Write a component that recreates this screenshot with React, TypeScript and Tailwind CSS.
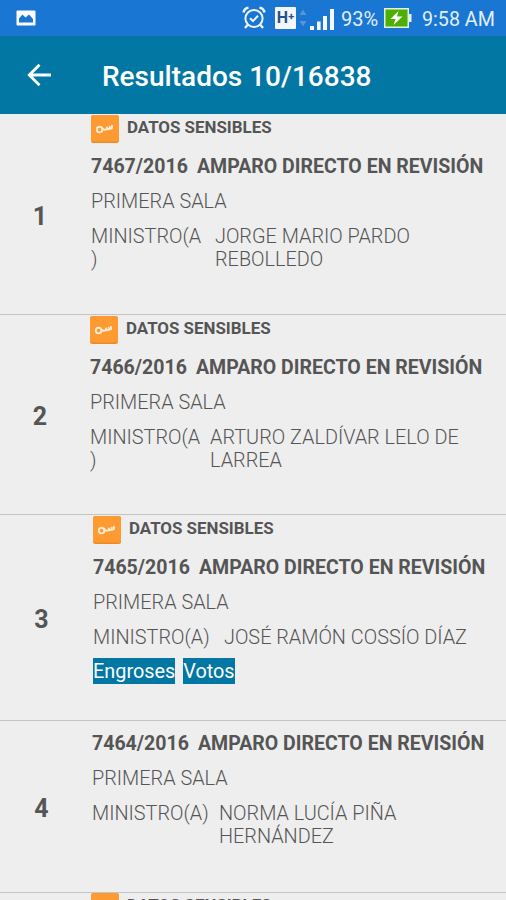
import { clsx } from 'clsx'

interface Resolution {
  position: number
  sensitive: boolean
  file: string
  kind: string
  chamber: string
  minister: string
  documents?: string[]
  wrapLabel?: boolean
  row: string
  indent: string
  gap: string
}

const RESULTS: Resolution[] = [
  {
    position: 1,
    sensitive: true,
    file: '7467/2016',
    kind: 'AMPARO DIRECTO EN REVISIÓN',
    chamber: 'PRIMERA SALA',
    minister: 'JORGE MARIO PARDO REBOLLEDO',
    wrapLabel: true,
    row: 'h-[201px]',
    indent: 'w-[91px] pr-[11px]',
    gap: 'gap-[10px]',
  },
  {
    position: 2,
    sensitive: true,
    file: '7466/2016',
    kind: 'AMPARO DIRECTO EN REVISIÓN',
    chamber: 'PRIMERA SALA',
    minister: 'ARTURO ZALDÍVAR LELO DE LARREA',
    wrapLabel: true,
    row: 'h-[200px]',
    indent: 'w-[90px] pr-[10px]',
    gap: 'gap-[6px]',
  },
  {
    position: 3,
    sensitive: true,
    file: '7465/2016',
    kind: 'AMPARO DIRECTO EN REVISIÓN',
    chamber: 'PRIMERA SALA',
    minister: 'JOSÉ RAMÓN COSSÍO DÍAZ',
    documents: ['Engroses', 'Votos'],
    row: 'h-[206px]',
    indent: 'w-[93px] pr-[10px]',
    gap: 'gap-[11px]',
  },
  {
    position: 4,
    sensitive: false,
    file: '7464/2016',
    kind: 'AMPARO DIRECTO EN REVISIÓN',
    chamber: 'PRIMERA SALA',
    minister: 'NORMA LUCÍA PIÑA HERNÁNDEZ',
    row: 'h-[172px]',
    indent: 'w-[92px] pr-[9px]',
    gap: 'gap-[7px]',
  },
]

function PictureIcon() {
  return (
    <svg width="20" height="16" viewBox="0 0 20 16" className="shrink-0">
      <rect x="0.5" y="0.5" width="19" height="15" rx="1" fill="#fff" />
      <path d="M3 12.5V8.5L6.5 4.5L9.5 7.5L13 4.5L17 9V12.5Z" fill="#1976d2" />
    </svg>
  )
}

function AlarmIcon() {
  return (
    <svg width="24" height="24" viewBox="0 0 24 24" fill="none" stroke="#eef5fc" strokeWidth="2" className="shrink-0">
      <circle cx="12" cy="12.5" r="8.6" />
      <path d="M1.5 6.5C2 4 4 2 6.5 1.8M22.5 6.5C22 4 20 2 17.5 1.8" strokeWidth="2.6" />
      <path d="M5.5 19L3 22M18.5 19L21 22" strokeWidth="2.4" />
      <path d="M8 12.2L11 15L16 9.8" />
    </svg>
  )
}

function NetworkIcon() {
  return (
    <div className="flex items-center">
      <div className="flex h-[22px] w-[21px] items-center justify-center rounded-[1px] bg-[#f3f7fc] text-[16px] leading-none font-bold text-[#27518c]">
        H<span className="-mt-1 text-[11px]">+</span>
      </div>
      <svg width="8" height="18" viewBox="0 0 8 18" fill="#5a93d6" className="ml-[3px]">
        <path d="M0.5 6L4 0.5L7.5 6Z" />
        <path d="M0.5 12L4 17.5L7.5 12Z" />
      </svg>
    </div>
  )
}

function SignalIcon() {
  return (
    <svg width="24" height="21" viewBox="0 0 24 21" fill="#f4f9ff" className="shrink-0">
      <rect x="0" y="17" width="4" height="4" />
      <rect x="7" y="12.5" width="3.6" height="8.5" />
      <rect x="13" y="7" width="4" height="14" />
      <rect x="20" y="0" width="4" height="21" />
    </svg>
  )
}

function BatteryIcon() {
  return (
    <svg width="28" height="20" viewBox="0 0 28 20" className="shrink-0">
      <rect x="0.75" y="0.75" width="23.5" height="18.5" fill="#4cb004" stroke="#e3f0dc" strokeWidth="1.5" />
      <rect x="25" y="6" width="2.5" height="8" fill="#e3f0dc" />
      <path d="M14.5 3L6.5 11H11.5L9.5 17L18.5 8.5H13Z" fill="#fff" />
    </svg>
  )
}

function BackIcon() {
  return (
    <svg width="24" height="24" viewBox="0 0 24 24" fill="none" stroke="#fff" strokeWidth="2.8">
      <path d="M24 12H3.5M12.5 1.8L2.3 12L12.5 22.2" />
    </svg>
  )
}

function SensitiveHeader() {
  return (
    <div className="flex h-[29px] items-start gap-2">
      <svg width="28" height="28" viewBox="0 0 28 28" className="shrink-0">
        <rect width="28" height="28" rx="2.5" fill="#f08a24" />
        <rect width="28" height="26.5" rx="2.5" fill="#fd9a31" />
        <g fill="none" stroke="#ffecd2" strokeWidth="1.9" strokeLinecap="round" strokeLinejoin="round">
          <circle cx="8.6" cy="14.6" r="2.8" />
          <path d="M11.4 13.2L13 14.8L16 14.2V12.4M16 14.2L18.8 13.8V11.8M18.8 13.8L21 13V10.6" />
        </g>
      </svg>
      <span className="mt-[2px] text-[16.9px] leading-5 font-bold whitespace-nowrap">DATOS SENSIBLES</span>
    </div>
  )
}

function StatusBar() {
  return (
    <div className="flex h-9 shrink-0 items-center bg-[#1976d2] pl-4 text-[20px] text-[#e3eefa]">
      <PictureIcon />
      <div className="ml-[206px] flex items-center whitespace-nowrap">
        <AlarmIcon />
        <div className="ml-[9px]">
          <NetworkIcon />
        </div>
        <div className="mt-[3px] ml-[3px]">
          <SignalIcon />
        </div>
        <span className="mt-[3px] ml-[7px] w-[43px]">93%</span>
        <BatteryIcon />
        <span className="mt-[3px] ml-[10px] text-[19.7px]">9:58 AM</span>
      </div>
    </div>
  )
}

function ResultRow({ item }: { item: Resolution }) {
  return (
    <li className={clsx('flex shrink-0 border-b border-[#c4c4c4]', item.row)}>
      <div className={clsx('flex shrink-0 items-center justify-center pt-1 text-[25px] font-bold', item.indent)}>
        {item.position}
      </div>
      <div className="flex-1 pt-px">
        {item.sensitive && <SensitiveHeader />}
        <p className={clsx('text-[19.55px] font-bold whitespace-nowrap', item.sensitive ? 'mt-[10.5px]' : 'pt-[10px]')}>
          {item.file}
          <span className="ml-[9px]">{item.kind}</span>
        </p>
        <p className="mt-3 font-light">{item.chamber}</p>
        <div className={clsx('mt-3 flex font-light', item.gap)}>
          <span className={clsx('shrink-0', item.wrapLabel ? 'w-[114px]' : 'w-[120px]')}>
            MINISTRO(A
            {item.wrapLabel && <br />})
          </span>
          <span className="w-[262px]">{item.minister}</span>
        </div>
        {item.documents && (
          <div className="mt-[9.5px] flex gap-2">
            {item.documents.map((name) => (
              <button key={name} type="button" className="h-[26px] bg-[#0277a4] text-white">
                {name}
              </button>
            ))}
          </div>
        )}
      </div>
    </li>
  )
}

export default function App() {
  return (
    <div className="flex h-[900px] w-[506px] flex-col overflow-hidden bg-[#eeeeee] font-[Roboto,sans-serif] text-[19.85px] leading-[23px] text-[#555555]">
      <StatusBar />
      <header className="flex h-[78px] shrink-0 items-center bg-[#0277a4] pl-[27px] text-white">
        <BackIcon />
        <h1 className="mt-[2px] ml-[51px] text-[28px] font-medium whitespace-nowrap">Resultados 10/16838</h1>
      </header>
      <ul className="flex min-h-0 flex-1 flex-col overflow-hidden">
        {RESULTS.map((item) => (
          <ResultRow key={item.position} item={item} />
        ))}
        {/* next result, scrolled almost out of view */}
        <li className="shrink-0 pl-[91px]">
          <SensitiveHeader />
        </li>
      </ul>
    </div>
  )
}
